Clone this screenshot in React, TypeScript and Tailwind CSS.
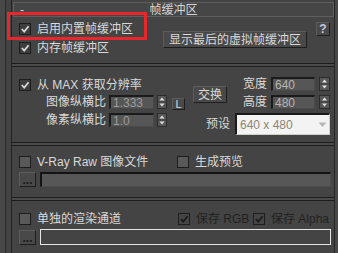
import clsx from 'clsx'

const FONT = "font-['Liberation_Sans','Noto_Sans_CJK_SC',sans-serif]"

function Check({ checked, disabled }: { checked?: boolean; disabled?: boolean }) {
  return (
    <span
      className={clsx(
        'flex h-[12px] w-[12px] shrink-0 items-center justify-center border border-[#1d1d1d]',
        checked ? 'bg-[#3d3d3d]' : 'bg-[#595959]',
        disabled && 'bg-[#454545]'
      )}
    >
      {checked && (
        <svg width="10" height="10" viewBox="0 0 10 10">
          <path
            d="M1.8 5 L4.2 7.6 L8.6 2.2"
            fill="none"
            stroke={disabled ? '#1a1a1a' : '#d8d8d8'}
            strokeWidth="1.7"
          />
        </svg>
      )}
    </span>
  )
}

function Spin({ w = 10 }: { w?: number }) {
  const c = w / 2
  return (
    <svg width={w} height={14} viewBox={`0 0 ${w} 14`} className="shrink-0">
      <rect x="0.5" y="0.5" width={w - 1} height="13" fill="#575757" stroke="#2c2c2c" />
      <line x1="1" y1="7" x2={w - 1} y2="7" stroke="#3a3a3a" />
      <path d={`M${c} 2.5 L${c + 2.5} 5.5 L${c - 2.5} 5.5 Z`} fill="#e2e2e2" />
      <path d={`M${c - 2.5} 8.5 L${c + 2.5} 8.5 L${c} 11.5 Z`} fill="#e2e2e2" />
    </svg>
  )
}

function Field({ value, w, dim }: { value: string; w: number; dim?: boolean }) {
  return (
    <div
      style={{ width: w }}
      className={clsx(
        'flex h-[14px] shrink-0 items-center border-t-2 border-l-2 border-r border-b border-t-[#1b1b1b] border-l-[#1b1b1b] border-r-[#4a4a4a] border-b-[#4a4a4a] bg-[#565656] pl-[2px]',
        dim ? 'text-[#9c9c9c]' : 'text-[#b4b4b4]'
      )}
    >
      {value}
    </div>
  )
}

function Button({ children, className }: { children: React.ReactNode; className?: string }) {
  return (
    <div
      className={clsx(
        'flex shrink-0 items-center justify-center border border-t-[#5c5c5c] border-l-[#5c5c5c] border-r-[#1e1e1e] border-b-[#1e1e1e] bg-[#494949]',
        className
      )}
    >
      {children}
    </div>
  )
}

function Rule() {
  return <div className="mr-[-2px] h-[4px] shrink-0 border-y border-[#1c1c1c] bg-[#4b4b4b]" />
}

export default function App() {
  return (
    <div
      className={`relative flex h-[253px] w-[338px] overflow-hidden bg-[#444444] text-[12px] leading-none text-[#d9d9d9] ${FONT}`}
    >
      <div className="w-[5px] bg-[#484848]" />
      <div className="w-[1px] bg-[#2a2a2a]" />
      <div className="w-[5px] bg-[#434343]" />
      <div className="w-[1px] bg-[#222222]" />

      <div className="flex w-[322px] flex-col">
        {/* rollout header */}
        <div className="ml-[1px] mt-[2px] flex h-[15px] shrink-0 items-center border border-[#5e5e5e] bg-[#464646] text-[#d4d4d4]">
          <span className="w-[14px] pl-[6px]">-</span>
          <span className="flex-1 text-center">帧缓冲区</span>
          <span className="w-[14px]" />
        </div>

        {/* built-in frame buffer */}
        <div className="flex h-[46px] shrink-0 items-start">
          <div className="w-[151px] pl-[7px] pt-[6px]">
            <div className="flex h-[12px] items-center gap-[6px]">
              <Check checked />
              <span>启用内置帧缓冲区</span>
            </div>
            <div className="mt-[7px] flex h-[12px] items-center gap-[6px]">
              <Check checked />
              <span>内存帧缓冲区</span>
            </div>
          </div>
          <Button className="mt-[14px] h-[17px] w-[144px]">显示最后的虚拟帧缓冲区</Button>
          <Button className="ml-[9px] mt-[5px] h-[14px] w-[14px] bg-[#3f3f3f] font-bold text-[#c8c8e0]">?</Button>
        </div>

        <Rule />

        {/* resolution */}
        <div className="flex h-[46px] shrink-0 items-start">
          <div className="w-[173px]">
            <div className="mt-[12px] flex h-[12px] items-center gap-[6px] pl-[7px]">
              <Check checked />
              <span>从 MAX 获取分辨率</span>
            </div>
            <div className="mt-[4px] flex h-[14px] items-center">
              <span className="w-[94px] text-right">图像纵横比</span>
              <span className="ml-[3px]">
                <Field value="1.333" w={45} dim />
              </span>
              <span className="ml-[3px] flex">
                <Spin />
              </span>
              <Button className="ml-[5px] mt-[4px] h-[12px] w-[13px] text-[11px]">L</Button>
            </div>
          </div>
          <Button className="ml-[8px] mt-[19px] h-[17px] w-[34px]">交换</Button>
          <div className="ml-[16px]">
            <div className="mt-[10px] flex h-[14px] items-center">
              <span className="w-[24px]">宽度</span>
              <span className="ml-[4px]">
                <Field value="640" w={44} />
              </span>
              <span className="ml-[4px] flex">
                <Spin w={11} />
              </span>
            </div>
            <div className="mt-[4px] flex h-[14px] items-center">
              <span className="w-[24px]">高度</span>
              <span className="ml-[4px]">
                <Field value="480" w={44} />
              </span>
              <span className="ml-[4px] flex">
                <Spin w={11} />
              </span>
            </div>
          </div>
        </div>
        <div className="flex h-[29px] shrink-0 items-start">
          <div className="flex h-[14px] items-center">
            <span className="w-[94px] text-right">像素纵横比</span>
            <span className="ml-[3px]">
              <Field value="1.0" w={45} dim />
            </span>
            <span className="ml-[3px] flex">
              <Spin />
            </span>
          </div>
          <span className="ml-[39px] flex h-[22px] w-[24px] items-center">预设</span>
          <div className="ml-[5px] flex h-[22px] w-[95px] items-center justify-between border-t-2 border-l-2 border-r border-b border-t-[#1b1b1b] border-l-[#1b1b1b] border-r-[#cfcfcf] border-b-[#cfcfcf] bg-[#f3f3f3] pl-[3px] pr-[2px] text-[#8d8476]">
            <span>640 x 480</span>
            <svg width="9" height="6" viewBox="0 0 9 6">
              <path d="M0.5 0.5 L8.5 0.5 L4.5 5 Z" fill="#b8b8b8" />
            </svg>
          </div>
        </div>

        <Rule />

        {/* V-Ray raw image file */}
        <div className="flex h-[51px] shrink-0 flex-col pl-[7px]">
          <div className="mt-[10px] flex h-[12px] items-center">
            <div className="flex w-[158px] items-center gap-[6px]">
              <Check />
              <span>V-Ray Raw 图像文件</span>
            </div>
            <div className="flex items-center gap-[6px]">
              <Check />
              <span>生成预览</span>
            </div>
          </div>
          <div className="mt-[4px] flex h-[15px] items-start">
            <Button className="h-[15px] w-[17px] bg-[#404040] text-[12px] font-bold leading-[12px] text-[#181820]">...</Button>
            <div className="ml-[4px] h-[15px] w-[291px] border-t-2 border-l-2 border-r border-b border-t-[#141414] border-l-[#141414] border-r-[#4c4c4c] border-b-[#4c4c4c] bg-[#575757]" />
          </div>
        </div>

        <Rule />

        {/* separate render channel */}
        <div className="flex flex-1 flex-col pl-[7px]">
          <div className="mt-[12px] flex h-[12px] items-center">
            <div className="flex w-[159px] items-center gap-[6px]">
              <Check />
              <span>单独的渲染通道</span>
            </div>
            <div className="flex w-[75px] items-center gap-[6px] text-[#222222]">
              <Check checked disabled />
              <span>保存 RGB</span>
            </div>
            <div className="flex items-center gap-[6px] text-[#222222]">
              <Check checked disabled />
              <span>保存 Alpha</span>
            </div>
          </div>
          <div className="mt-[4px] flex h-[16px] items-start">
            <Button className="mt-[1px] h-[15px] w-[17px] bg-[#404040] text-[12px] font-bold leading-[12px] text-[#181820]">...</Button>
            <div className="ml-[4px] h-[16px] w-[291px] border border-[#e6e6e6] bg-[#444444]" />
          </div>
        </div>
      </div>

      <div className="w-[1px] bg-[#262626]" />
      <div className="w-[3px] bg-[#484848]" />

      {/* red annotation box */}
      <div className="pointer-events-none absolute left-[7px] top-[12px] h-[28px] w-[140px] border-[3px] border-[#e8262b]" />
    </div>
  )
}
